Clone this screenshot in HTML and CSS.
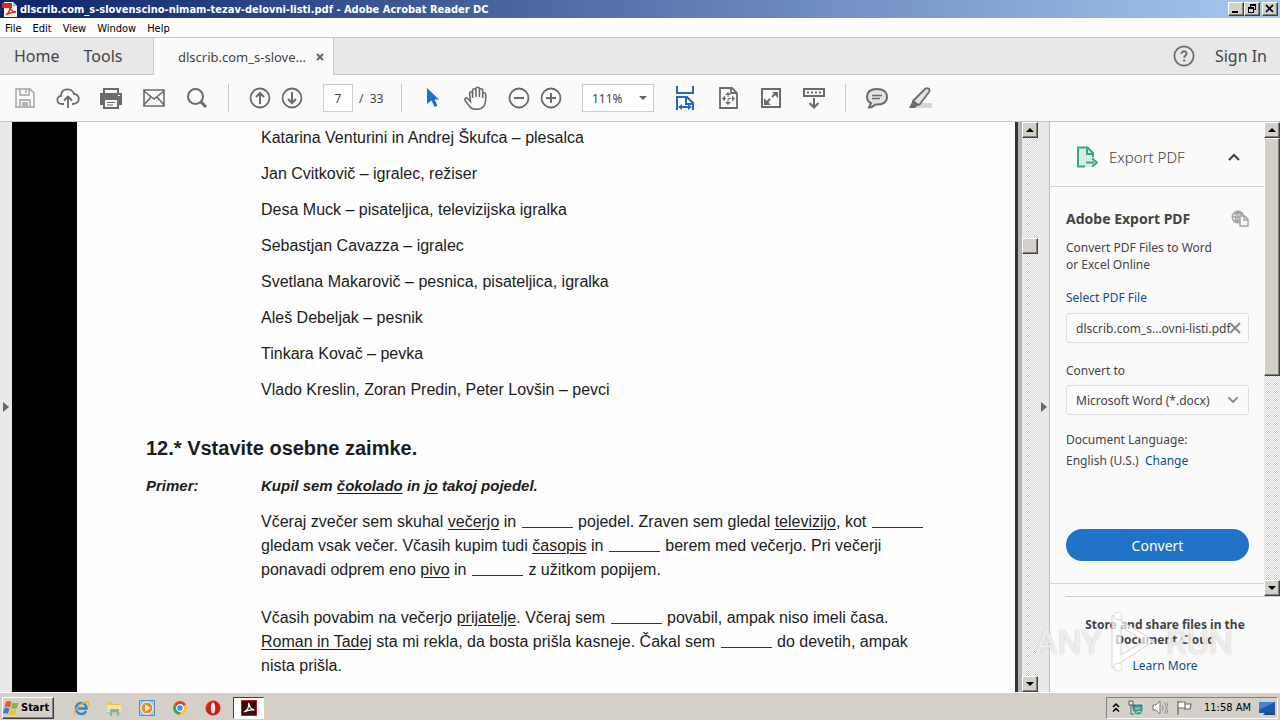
FILE: index.html
```html
<!DOCTYPE html>
<html lang="sl">
<head>
    <meta charset="UTF-8">
    <meta name="viewport" content="width=device-width, initial-scale=1.0">
    <title>dlscrib.com_s-slovenscino-nimam-tezav-delovni-listi.pdf - Adobe Acrobat Reader DC</title>
    <link rel="stylesheet" href="styles.css">
</head>
<body>
    <!-- Title bar -->
    <header class="title-bar">
        <svg class="title-icon" viewBox="0 0 16 16"><path d="M2 1h9l4 4v11H2z" fill="#f4f4f4"/><path d="M11 1l4 4h-4z" fill="#b9b9b9"/><path d="M0 2h10v5H0z" fill="#e0281c"/><path d="M4 14c3-2 4-5 4-8 1 4 3 5 6 5-4 0-7 1-10 3z" fill="none" stroke="#d8301f" stroke-width="1.3"/></svg>
        <span class="title-text">dlscrib.com_s-slovenscino-nimam-tezav-delovni-listi.pdf - Adobe Acrobat Reader DC</span>
        <div class="window-controls">
            <button class="control-btn" aria-label="Minimize"><svg viewBox="0 0 12 10"><path d="M2 7h6v2H2z"/></svg></button>
            <button class="control-btn" aria-label="Restore"><svg viewBox="0 0 12 10"><path d="M4 0h6v6H8V5h1V2H5v1H4zM2 3h6v6H2zM3 5v3h4V5z" fill-rule="evenodd"/></svg></button>
            <button class="control-btn close-btn" aria-label="Close"><svg viewBox="0 0 12 10"><path d="M2 1l7 7M9 1L2 8" stroke="#000" stroke-width="1.7"/></svg></button>
        </div>
    </header>

    <nav class="menu-bar">
        <button>File</button>
        <button>Edit</button>
        <button>View</button>
        <button>Window</button>
        <button>Help</button>
    </nav>

    <!-- Tabs -->
    <div class="tab-bar">
        <div class="main-tabs">
            <button>Home</button>
            <button>Tools</button>
        </div>
        <div class="doc-tab">
            <span>dlscrib.com_s-slove...</span>
            <button class="tab-close" aria-label="Close tab"><svg viewBox="0 0 8 8"><path d="M1 1l6 6M7 1L1 7" stroke="#666" stroke-width="2"/></svg></button>
        </div>
        <div class="account">
            <button class="help-btn" aria-label="Help"><svg viewBox="0 0 22 22"><circle cx="11" cy="11" r="9.6" fill="none" stroke="#6e6e6e" stroke-width="1.8"/><path d="M8.4 8.8c0-3.4 5.4-3.2 5.2-.1-.1 1.8-2.4 1.9-2.4 4M11.2 14.4v2" fill="none" stroke="#6e6e6e" stroke-width="2"/></svg></button>
            <button class="sign-in">Sign In</button>
        </div>
    </div>

    <!-- Toolbar -->
    <div class="toolbar">
        <button class="tool" aria-label="Save"><svg viewBox="0 0 24 24" fill="none" stroke="#b4b4b4" stroke-width="1.8"><path d="M3 3h14l4 4v14H3zM7 3v6h9V3M13 4v3M7 21v-7h10v7M9 17h6M9 19h6"/></svg></button>
        <button class="tool" aria-label="Upload"><svg viewBox="0 0 24 24" fill="none" stroke="#6b6b6b" stroke-width="1.8"><path d="M8 18H6C0 18 0 10 5 10c0-8 11-9 13-2 6 0 7 10-1 10h-1M12 22V11M8 14.500l4-4 4 4"/></svg></button>
        <button class="tool" aria-label="Print"><svg viewBox="0 0 24 24"><path d="M4 2h16v5H4zM1 8h22v11h-4v-5H5v5H1z" fill="#6b6b6b"/><path d="M6 4h12v3H6z" fill="#fafafa"/><path d="M5 13h14v9H5z" fill="#fafafa" stroke="#6b6b6b" stroke-width="2"/><path d="M8 16.500h8M8 19h6" stroke="#6b6b6b" stroke-width="1.200"/><path d="M1 7h22v5H1z" fill="#6b6b6b"/><path d="M19 9h2v1h-2z" fill="#fafafa"/></svg></button>
        <button class="tool" aria-label="Email"><svg viewBox="0 0 24 24" fill="none" stroke="#6b6b6b" stroke-width="1.6"><path d="M2 4h20v16H2zM2 5l10 8L22 5M2 19l7-8M22 19l-7-8"/></svg></button>
        <button class="tool" aria-label="Find"><svg viewBox="0 0 24 24" fill="none" stroke="#6b6b6b"><circle cx="10.500" cy="10.500" r="7.500" stroke-width="2"/><path d="M16 16l5 5" stroke-width="3"/></svg></button>
        <span class="divider"></span>
        <div class="tool-pair">
            <button class="tool" aria-label="Previous page"><svg viewBox="0 0 24 24" fill="none" stroke="#6b6b6b" stroke-width="1.8"><circle cx="12" cy="12" r="9.500"/><path d="M12 18V7M8 11l4-4 4 4" stroke-width="2"/></svg></button>
            <button class="tool" aria-label="Next page"><svg viewBox="0 0 24 24" fill="none" stroke="#6b6b6b" stroke-width="1.8"><circle cx="12" cy="12" r="9.500"/><path d="M12 6v11M8 13l4 4 4-4" stroke-width="2"/></svg></button>
        </div>
        <div class="page-nav">
            <input class="page-input" type="text" value="7" aria-label="Page number">
            <span class="page-total">/ &nbsp;33</span>
        </div>
        <span class="divider"></span>
        <button class="tool" aria-label="Select tool"><svg viewBox="0 0 24 24"><path d="M6 2l12 11.500h-4.500l3 6-3 1.500-3-6.500L6 18z" fill="#1f6fd0"/></svg></button>
        <button class="tool" aria-label="Hand tool"><svg viewBox="0 0 24 24" fill="none" stroke="#6b6b6b" stroke-width="1.600"><path d="M6.500 15.500L3.500 12.500C1.500 11 0 13 1.500 15l4.500 6c3 3.500 11 3.200 14-1 2-3 1.700-6 1.700-11.500 0-2.300-3-2.300-3 0V12 4.500c0-2.300-3.300-2.300-3.300 0V11 3c0-2.300-3.500-2.300-3.500 0v8V4.500c0-2.300-3.300-2.300-3.300 0V12 7.500c0-2.300-3-2.300-3 0z"/></svg></button>
        <div class="tool-pair">
            <button class="tool" aria-label="Zoom out"><svg viewBox="0 0 24 24" fill="none" stroke="#6b6b6b" stroke-width="1.800"><circle cx="12" cy="12" r="9.500"/><path d="M7 12h10" stroke-width="2"/></svg></button>
            <button class="tool" aria-label="Zoom in"><svg viewBox="0 0 24 24" fill="none" stroke="#6b6b6b" stroke-width="1.800"><circle cx="12" cy="12" r="9.500"/><path d="M7 12h10M12 7v10" stroke-width="2"/></svg></button>
        </div>
        <div class="select-box zoom-box">
            <select aria-label="Zoom level"><option>111%</option></select>
            <svg viewBox="0 0 8 4"><path d="M0 0h8L4 4z" fill="#666"/></svg>
        </div>
        <button class="tool" aria-label="Scrolling"><svg viewBox="0 0 24 24" fill="none" stroke="#2468c4" stroke-width="2"><path d="M4 0v7h16V0M4 24V11h10l6 6v7M13 11v7h7M7 21h10"/><path d="M9 18l-4 3 4 3zM15 18l4 3-4 3z" fill="#2468c4" stroke="none"/></svg></button>
        <button class="tool" aria-label="Fit page"><svg viewBox="0 0 24 24" fill="none" stroke="#6b6b6b" stroke-width="1.800"><path d="M4 2h12l5 5v15H4zM15 2v5h5"/><path d="M12 8v9M7 12.500h10" stroke-width="1" stroke-dasharray="3 2"/><path d="M12 6l3 3H9zM12 19l-3-3h6zM6 12.500l3-3v6zM19 12.500l-3-3v6z" fill="#6b6b6b" stroke="none"/></svg></button>
        <button class="tool" aria-label="Full screen"><svg viewBox="0 0 24 24" fill="none" stroke="#6b6b6b" stroke-width="2"><path d="M3 3h18v18H3zM13 11l4-4M11 13l-4 4"/><path d="M13 6h6v6zM5 12v7h7z" fill="#6b6b6b" stroke="none"/></svg></button>
        <button class="tool" aria-label="Read mode"><svg viewBox="0 0 24 24" fill="none" stroke="#6b6b6b" stroke-width="2"><path d="M2 3h20v7H2zM12 12v9M7.500 17l4.500 4.500 4.500-4.500"/><path d="M5 6.500h14" stroke-dasharray="2 2"/></svg></button>
        <span class="divider"></span>
        <button class="tool" aria-label="Comment"><svg viewBox="0 0 24 24"><path d="M12 3C5 3 2 6.500 2 11c0 3 1.500 5 4 6.200L4 21.500c3 0 5-1.500 6.500-3C18 19 22 16 22 11c0-5-4-8-10-8z" fill="#e2e2e2" stroke="#6b6b6b" stroke-width="2"/><path d="M7 9.500h10M7 12.500h8" stroke="#6b6b6b" stroke-width="1.300"/></svg></button>
        <button class="tool" aria-label="Highlight"><svg viewBox="0 0 24 24"><path d="M10 17h14v5H7z" fill="#d6d6d6"/><path d="M5 15L17 3c2-2 6 0 4 3l-9 12c-2 2-8 0-7-3z" fill="#e2e2e2" stroke="#6b6b6b" stroke-width="1.800"/><path d="M5 14l7 5-3 1-2 2H1z" fill="#6b6b6b"/></svg></button>
    </div>

    <!-- Document and side panel -->
    <main class="workspace">
        <button class="rail left-rail" aria-label="Show navigation pane"><svg viewBox="0 0 6 10"><path d="M0 0l6 5-6 5z" fill="#666"/></svg></button>

        <article class="document">
            <div class="scan">
                <ul class="people">
                    <li>Katarina Venturini in Andrej Škufca – plesalca</li>
                    <li>Jan Cvitkovič – igralec, režiser</li>
                    <li>Desa Muck – pisateljica, televizijska igralka</li>
                    <li>Sebastjan Cavazza – igralec</li>
                    <li>Svetlana Makarovič – pesnica, pisateljica, igralka</li>
                    <li>Aleš Debeljak – pesnik</li>
                    <li>Tinkara Kovač – pevka</li>
                    <li>Vlado Kreslin, Zoran Predin, Peter Lovšin – pevci</li>
                </ul>
                <h1>12.* Vstavite osebne zaimke.</h1>
                <div class="example">
                    <span class="example-label">Primer:</span>
                    <span>Kupil sem <u>čokolado</u> in <u>jo</u> takoj pojedel.</span>
                </div>
                <p>Včeraj zvečer sem skuhal <u>večerjo</u> in <span class="blank"></span> pojedel. Zraven sem gledal <u>televizijo</u>, kot <span class="blank"></span><br>
                gledam vsak večer. Včasih kupim tudi <u>časopis</u> in <span class="blank"></span> berem med večerjo. Pri večerji<br>
                ponavadi odprem eno <u>pivo</u> in <span class="blank"></span> z užitkom popijem.</p>
                <p>Včasih povabim na večerjo <u>prijatelje</u>. Včeraj sem <span class="blank"></span> povabil, ampak niso imeli časa.<br>
                <u>Roman in Tadej</u> sta mi rekla, da bosta prišla kasneje. Čakal sem <span class="blank"></span> do devetih, ampak<br>
                nista prišla.</p>
            </div>
        </article>

        <div class="scrollbar doc-scroll">
            <button class="scroll-btn" aria-label="Scroll up"><svg viewBox="0 0 8 4"><path d="M0 4h8L4 0z"/></svg></button>
            <div class="scroll-thumb"></div>
            <button class="scroll-btn scroll-down" aria-label="Scroll down"><svg viewBox="0 0 8 4"><path d="M0 0h8L4 4z"/></svg></button>
        </div>
        <button class="rail right-rail" aria-label="Hide tools pane"><svg viewBox="0 0 6 10"><path d="M0 0l6 5-6 5z" fill="#666"/></svg></button>

        <aside class="side-panel">
            <div class="panel-top">
                <div class="panel-content">
                    <button class="panel-header">
                        <svg class="export-icon" viewBox="0 0 22 22"><path d="M2 1h10l6 6v14H2z" fill="#d9ede5"/><path d="M9 20.500H2V1.500h9.500L17 7v4M11 2v6h6" fill="none" stroke="#35a887" stroke-width="2"/><path d="M10 16.500h8M16 12.500l5 4-5 4" fill="none" stroke="#35a887" stroke-width="2"/></svg>
                        <span>Export PDF</span>
                        <svg class="chevron" viewBox="0 0 12 8"><path d="M1 7l5-5 5 5" fill="none" stroke="#444" stroke-width="2.200"/></svg>
                    </button>
                    <div class="export-form">
                        <div class="export-title">
                            <h2>Adobe Export PDF</h2>
                            <svg viewBox="0 0 18 18" fill="none" stroke="#a2a2a2" stroke-width="1.400"><circle cx="7" cy="7" r="5.800"/><path d="M1 7h12M7 1v12M3 3.500h8M3 10.500h6M7 1C3.500 4 3.500 10 7 13M7 1c3 2 4 5 3 7"/><path d="M9 6h4.500L17 9.500V16H9z" fill="#fafafa"/><path d="M13 6v4h4"/></svg>
                        </div>
                        <p class="export-text">Convert PDF Files to Word<br>or Excel Online</p>
                        <a class="select-file" href="#">Select PDF File</a>
                        <div class="file-box">
                            <span>dlscrib.com_s...ovni-listi.pdf</span>
                            <button class="file-clear" aria-label="Remove file"><svg viewBox="0 0 12 12"><path d="M1 1l10 10M11 1L1 11" stroke="#8a8a8a" stroke-width="2"/></svg></button>
                        </div>
                        <label class="format-label" for="format">Convert to</label>
                        <div class="select-box format-box">
                            <select id="format"><option>Microsoft Word (*.docx)</option></select>
                            <svg viewBox="0 0 10 6"><path d="M0 0l5 5 5-5" fill="none" stroke="#888" stroke-width="1.800"/></svg>
                        </div>
                        <p class="language">Document Language:<br>English (U.S.) &nbsp;<a href="#">Change</a></p>
                        <button class="convert-btn">Convert</button>
                    </div>
                </div>
                <div class="scrollbar panel-scroll">
                    <button class="scroll-btn" aria-label="Scroll up"><svg viewBox="0 0 8 4"><path d="M0 4h8L4 0z"/></svg></button>
                    <div class="scroll-thumb"></div>
                    <button class="scroll-btn scroll-down" aria-label="Scroll down"><svg viewBox="0 0 8 4"><path d="M0 0h8L4 4z"/></svg></button>
                </div>
            </div>
            <div class="panel-footer">
                <p>Store and share files in the<br>Document Cloud</p>
                <a href="#">Learn More</a>
            </div>
            <div class="watermark">
                <span>ANY</span>
                <svg viewBox="0 0 56 64"><path d="M6 5l42 26L6 58zM15 17v28l23-14z" fill="#fff" fill-opacity=".7" fill-rule="evenodd" stroke="#d4d4d4" stroke-width="1"/><circle cx="12" cy="6" r="4" fill="#fff" stroke="#ddd"/><circle cx="12" cy="57" r="4" fill="#fff" stroke="#ddd"/></svg>
                <span>RUN</span>
            </div>
        </aside>
    </main>

    <!-- Taskbar -->
    <footer class="taskbar">
        <button class="start-btn">
            <svg viewBox="0 0 18 16"><path d="M3 2c2-1.500 4-1 5.500 0L7 7.500c-2-1-3.500-1-5.500 0z" fill="#e8562a"/><path d="M9.500 2.500c2 1 4 1 6 0L14 8c-2 1-4 1-6 0z" fill="#7cb83c"/><path d="M1 8.500c2-1 4-1 5.500 0L5 14c-2-1-3.500-1-5.500 0z" fill="#3c7ed0"/><path d="M7.500 9c2 1 4 1 6 0L12 14.500c-2 1-4 1-6 0z" fill="#f4c22c"/></svg>
            Start
        </button>
        <div class="quick-launch">
            <button aria-label="Internet Explorer"><svg viewBox="0 0 16 16"><path d="M13 11c-2 4.500-9.500 4-10-2.500 0-7 10-7.500 10.500 0H5" fill="none" stroke="#2b86d0" stroke-width="2.500"/><path d="M2 15c-3-3 6-13 12-13 2 0 2 2 1 4" fill="none" stroke="#e3b62f" stroke-width="1.300"/></svg></button>
            <button aria-label="Explorer"><svg viewBox="0 0 16 16"><path d="M1 2h5l1 2h8v10H1z" fill="#e6c45d"/><path d="M1 5h14v7H1z" fill="#f7e596"/><path d="M4 9h9v7h-2v-4H6v4H4z" fill="#6ab4dd"/></svg></button>
            <button aria-label="Media Player"><svg viewBox="0 0 16 16"><path d="M.5.5h15v15H.5z" fill="#9fcaf0" stroke="#4c8fc8"/><circle cx="8" cy="8" r="6" fill="#ef8a1c" stroke="#fff"/><path d="M6 4.500v7L11.500 8z" fill="#fff"/></svg></button>
            <button aria-label="Chrome"><svg viewBox="0 0 16 16"><circle cx="8" cy="8" r="7" fill="#f5c630"/><path d="M8 8L2 4.500a7 7 0 0 1 12 0z" fill="#dc4236"/><path d="M8 8L2 4.500a7 7 0 0 0 5 10.400L10 10z" fill="#3fa352"/><circle cx="8" cy="8" r="3.300" fill="#4a8af0" stroke="#fff" stroke-width="1.200"/></svg></button>
            <button aria-label="Opera"><svg viewBox="0 0 16 16"><circle cx="8" cy="8" r="7.500" fill="#c81f1f"/><ellipse cx="8" cy="8" rx="2.200" ry="5.500" fill="#f5e5e5"/><path d="M8 1C3 1 1 5 1 8" fill="none" stroke="#ee7468"/></svg></button>
        </div>
        <button class="task-active" aria-label="Adobe Acrobat Reader DC"><svg viewBox="0 0 16 16"><path d="M.5.5h15v15H.5z" fill="#3b0c0c" stroke="#b32020"/><path d="M3 12c4-2 5-6 4.500-9C9 8 10 9.500 13.500 10 9 9.500 7 10 3 12z" fill="none" stroke="#fff" stroke-width="1.200"/></svg></button>
        <div class="tray">
            <svg class="tray-arrows" viewBox="0 0 8 10"><path d="M1 4l3-3 3 3M1 8.500l3-3 3 3" fill="none" stroke="#000" stroke-width="1.500"/></svg>
            <svg viewBox="0 0 16 16"><path d="M4 4h11v8H4z" fill="#2c7190" stroke="#dfe8ea"/><circle cx="10" cy="10" r="4.500" fill="#46a878"/><path d="M7 8l3 1 2-2M8 13l2-2 3 1" stroke="#9adcf0" fill="none"/><path d="M1 1h4v4H1zM3 5v9h3" fill="#ece8e0" stroke="#555"/></svg>
            <svg viewBox="0 0 16 16"><path d="M1 5h3l4-4v13l-4-4H1z" fill="#fff" stroke="#777"/><path d="M10 5c1.500 2 1.500 4 0 6M12 3c3 3 3 7 0 10M14 2c3 4 3 8 0 12" fill="none" stroke="#858585"/></svg>
            <svg class="flag" viewBox="0 0 16 16"><path d="M2 1v14M2 2h7v6H2M9 4h6l-1 5H8" fill="#fff" stroke="#6b6b6b" stroke-width="1.200"/></svg>
            <span class="clock">11:58 AM</span>
            <svg class="desktop-icon" viewBox="0 0 16 16"><path d="M0 2h16v11H0z" fill="#1d57ae"/><path d="M0 2h16L0 10z" fill="#4784d2"/><path d="M6 13h10v2H4z" fill="#284474"/></svg>
        </div>
    </footer>
</body>
</html>
```
FILE: styles.css
```css
* {
    margin: 0;
    padding: 0;
    box-sizing: border-box;
}

body {
    font-family: "Noto Sans", sans-serif;
    font-size: 12px;
    color: #444;
    background-color: #fafafa;
    height: 100vh;
    display: flex;
    flex-direction: column;
    overflow: hidden;
}

button {
    font: inherit;
    color: inherit;
    background: none;
    border: none;
}

svg {
    display: block;
    flex: none;
}

a {
    color: #0b4d8f;
    text-decoration: none;
}

/* Title bar */
.title-bar {
    height: 18px;
    flex: none;
    display: flex;
    align-items: center;
    gap: 2px;
    padding: 0 2px;
    background: linear-gradient(90deg, #0a246a, #a6caf0);
}

.title-icon {
    width: 16px;
    height: 16px;
}

.title-text {
    flex: 1;
    font-family: "DejaVu Sans Condensed", "DejaVu Sans", sans-serif;
    font-stretch: condensed;
    font-size: 11px;
    font-weight: bold;
    color: #fff;
    white-space: nowrap;
}

.window-controls {
    display: flex;
}

.control-btn,
.scroll-btn,
.scroll-thumb,
.start-btn {
    background-color: #d4d0c8;
    border: 1px solid;
    border-color: #fff #404040 #404040 #fff;
    box-shadow: inset -1px -1px 0 #808080;
}

.control-btn {
    width: 16px;
    height: 14px;
}

.control-btn svg {
    width: 12px;
    height: 10px;
    margin: 0 auto;
}

.close-btn {
    margin-left: 2px;
}

/* Menu */
.menu-bar {
    height: 20px;
    flex: none;
    display: flex;
    gap: 11px;
    padding: 1px 5px 0;
    background-color: #fcfcfc;
    border-bottom: 1px solid #c4c4c4;
    font-family: "DejaVu Sans Condensed", "DejaVu Sans", sans-serif;
    font-stretch: condensed;
    font-size: 11px;
    color: #000;
}

/* Tabs */
.tab-bar {
    height: 37px;
    flex: none;
    display: flex;
    background-color: #e8e8e8;
}

.main-tabs {
    width: 154px;
    display: flex;
    gap: 24px;
    padding-left: 14px;
    font-size: 16px;
    border-right: 1px solid #c8c8c8;
    border-bottom: 1px solid #c8c8c8;
}

.doc-tab {
    width: 180px;
    display: flex;
    align-items: center;
    justify-content: flex-end;
    gap: 10px;
    padding-right: 9px;
    font-size: 13px;
    background-color: #fafafa;
    border-right: 1px solid #c8c8c8;
}

.tab-close svg {
    width: 8px;
    height: 8px;
}

.account {
    flex: 1;
    display: flex;
    align-items: center;
    justify-content: flex-end;
    gap: 20px;
    padding-right: 13px;
    font-size: 16px;
    border-bottom: 1px solid #c8c8c8;
}

.help-btn svg {
    width: 22px;
    height: 22px;
}

/* Toolbar */
.toolbar {
    height: 47px;
    flex: none;
    display: flex;
    align-items: center;
    gap: 19px;
    padding: 0 13px;
    border-bottom: 1px solid #c4c4c4;
}

.tool {
    flex: none;
}

.tool svg {
    width: 24px;
    height: 24px;
}

.tool-pair {
    display: flex;
    gap: 8px;
}

.divider {
    width: 1px;
    height: 28px;
    background-color: #c8c8c8;
}

.page-nav {
    display: flex;
    align-items: center;
    gap: 6px;
}

.page-input {
    width: 30px;
    height: 28px;
    font: inherit;
    color: inherit;
    text-align: center;
    background-color: #fff;
    border: 1px solid #ccc;
}

.page-total {
    width: 23px;
    white-space: nowrap;
}

.select-box {
    position: relative;
}

.select-box select {
    width: 100%;
    height: 100%;
    padding: 0 9px;
    font: inherit;
    color: inherit;
    background-color: transparent;
    border: 1px solid #ccc;
    appearance: none;
}

.select-box svg {
    position: absolute;
    top: 50%;
    transform: translateY(-50%);
    pointer-events: none;
}

.zoom-box {
    width: 72px;
    height: 28px;
    background-color: #fff;
}

.zoom-box svg {
    right: 7px;
    width: 8px;
    height: 4px;
}

/* Workspace */
.workspace {
    flex: 1;
    min-height: 0;
    display: flex;
}

.rail {
    width: 12px;
    flex: none;
    background-color: #e8e8e8;
}

.rail svg {
    width: 6px;
    height: 10px;
    margin: 0 auto;
}

.right-rail {
    border-right: 1px solid #c0c0c0;
}

.document {
    flex: 1;
    min-width: 0;
    background-color: #fdfdfd;
    border-left: 65px solid #000;
    overflow: hidden;
}

.scan {
    height: 100%;
    padding: 1px 0 0 69px;
    font-family: "Liberation Sans", Arial, sans-serif;
    font-size: 16px;
    line-height: 24px;
    color: #1c1c1c;
    white-space: nowrap;
    border-right: 3px solid #333;
}

.people {
    list-style: none;
    display: flex;
    flex-direction: column;
    gap: 6px;
    padding-left: 115px;
    line-height: 30px;
}

.scan h1 {
    margin-top: 31px;
    font-size: 20px;
    line-height: 24px;
}

.example {
    display: flex;
    margin: 14px 0 12px;
    font-size: 15px;
    font-weight: bold;
    font-style: italic;
}

.example-label {
    width: 115px;
}

.scan p {
    margin-left: 115px;
    margin-bottom: 24px;
}

.scan u {
    text-underline-offset: 2px;
}

.blank {
    display: inline-block;
    width: 51px;
    height: 4px;
    margin: 0 1px;
    vertical-align: -1px;
    border-bottom: 1px solid #333;
}

/* Scrollbars */
.scrollbar {
    width: 16px;
    flex: none;
    display: flex;
    flex-direction: column;
    background: repeating-conic-gradient(#d4d0c8 0 25%, #fff 0 50%) 0 0 / 2px 2px;
}

.scroll-btn {
    width: 16px;
    height: 16px;
    flex: none;
}

.scroll-btn svg {
    width: 8px;
    height: 4px;
    margin: 0 auto;
}

.scroll-down {
    margin-top: auto;
}

.doc-scroll {
    box-sizing: content-box;
    border-left: 4px solid #b4b4b4;
}

.doc-scroll .scroll-thumb {
    height: 16px;
    margin-top: 100px;
}

.panel-scroll .scroll-thumb {
    height: 238px;
}

/* Side panel */
.side-panel {
    width: 230px;
    flex: none;
    display: flex;
    flex-direction: column;
    position: relative;
}

.panel-top {
    display: flex;
    height: 474px;
    flex: none;
}

.panel-content {
    flex: 1;
}

.panel-header {
    width: 100%;
    height: 65px;
    display: flex;
    align-items: center;
    gap: 11px;
    padding: 6px 24px 0 26px;
    font-size: 15px;
    font-weight: 300;
    border-bottom: 1px solid #d4d4d4;
}

.export-icon {
    width: 22px;
    height: 22px;
}

.chevron {
    width: 12px;
    height: 8px;
    margin-left: auto;
}

.export-form {
    padding: 22px 15px 22px 16px;
    border-bottom: 1px solid #d4d4d4;
    line-height: 17px;
}

.export-title {
    display: flex;
    justify-content: space-between;
    align-items: center;
}

.export-title h2 {
    font-size: 14px;
    line-height: 20px;
}

.export-title svg {
    width: 18px;
    height: 18px;
}

.export-text {
    margin: 10px 0 16px;
}

.select-file,
.format-label {
    display: block;
}

.file-box {
    height: 30px;
    display: flex;
    align-items: center;
    justify-content: space-between;
    position: relative;
    margin: 7px 0 19px;
    padding-left: 9px;
    white-space: nowrap;
    border: 1px solid #ddd;
    border-radius: 3px;
}

.file-clear {
    position: absolute;
    right: 7px;
}

.file-clear svg {
    width: 12px;
    height: 12px;
}

.format-box {
    height: 30px;
    margin-top: 6px;
}

.format-box select {
    border-color: #ddd;
    border-radius: 3px;
}

.format-box svg {
    right: 11px;
    width: 10px;
    height: 6px;
}

.language {
    margin: 14px 0 58px;
    line-height: 21px;
}

.convert-btn {
    display: block;
    width: 100%;
    height: 32px;
    font-size: 14px;
    color: #fff;
    background-color: #2173c8;
    border-radius: 16px;
}

.panel-footer {
    margin-left: 16px;
    padding-top: 20px;
    text-align: center;
    line-height: 15px;
    border-top: 1px solid #ccc;
}

.panel-footer p {
    padding-right: 16px;
    margin-bottom: 11px;
    font-weight: bold;
}

.panel-footer a {
    padding-right: 16px;
}

/* Watermark over the panel corner */
.watermark {
    position: absolute;
    right: 47px;
    bottom: 18px;
    display: flex;
    align-items: center;
    gap: 4px;
    font-family: Roboto, sans-serif;
    font-size: 34px;
    color: rgba(255, 255, 255, 0.7);
    text-shadow: 0 0 2px #bbb;
    pointer-events: none;
}

.watermark svg {
    width: 56px;
    height: 64px;
}

/* Taskbar */
.taskbar {
    height: 28px;
    flex: none;
    display: flex;
    align-items: center;
    padding: 2px 2px 0;
    background-color: #d4d0c8;
    border-top: 1px solid #fff;
    font-family: "DejaVu Sans Condensed", "DejaVu Sans", sans-serif;
    font-stretch: condensed;
    font-size: 11px;
    color: #000;
}

.start-btn {
    width: 52px;
    height: 22px;
    display: flex;
    align-items: center;
    font-weight: bold;
}

.start-btn svg {
    width: 18px;
    height: 16px;
}

.quick-launch {
    display: flex;
    gap: 17px;
    margin: 0 12px 0 19px;
}

.quick-launch svg {
    width: 16px;
    height: 16px;
}

.task-active {
    width: 31px;
    height: 22px;
    background-color: #fff;
    border: 1px solid;
    border-color: #404040 #fff #fff #404040;
}

.task-active svg {
    width: 16px;
    height: 16px;
    margin: 0 auto;
}

.tray {
    height: 22px;
    display: flex;
    align-items: center;
    gap: 8px;
    margin-left: auto;
    padding: 0 2px 0 5px;
    border: 1px solid;
    border-color: #808080 #fff #fff #808080;
}

.tray svg {
    width: 16px;
    height: 16px;
}

.tray .tray-arrows {
    width: 8px;
    height: 10px;
}

.clock {
    margin-left: 4px;
    white-space: nowrap;
}
```
